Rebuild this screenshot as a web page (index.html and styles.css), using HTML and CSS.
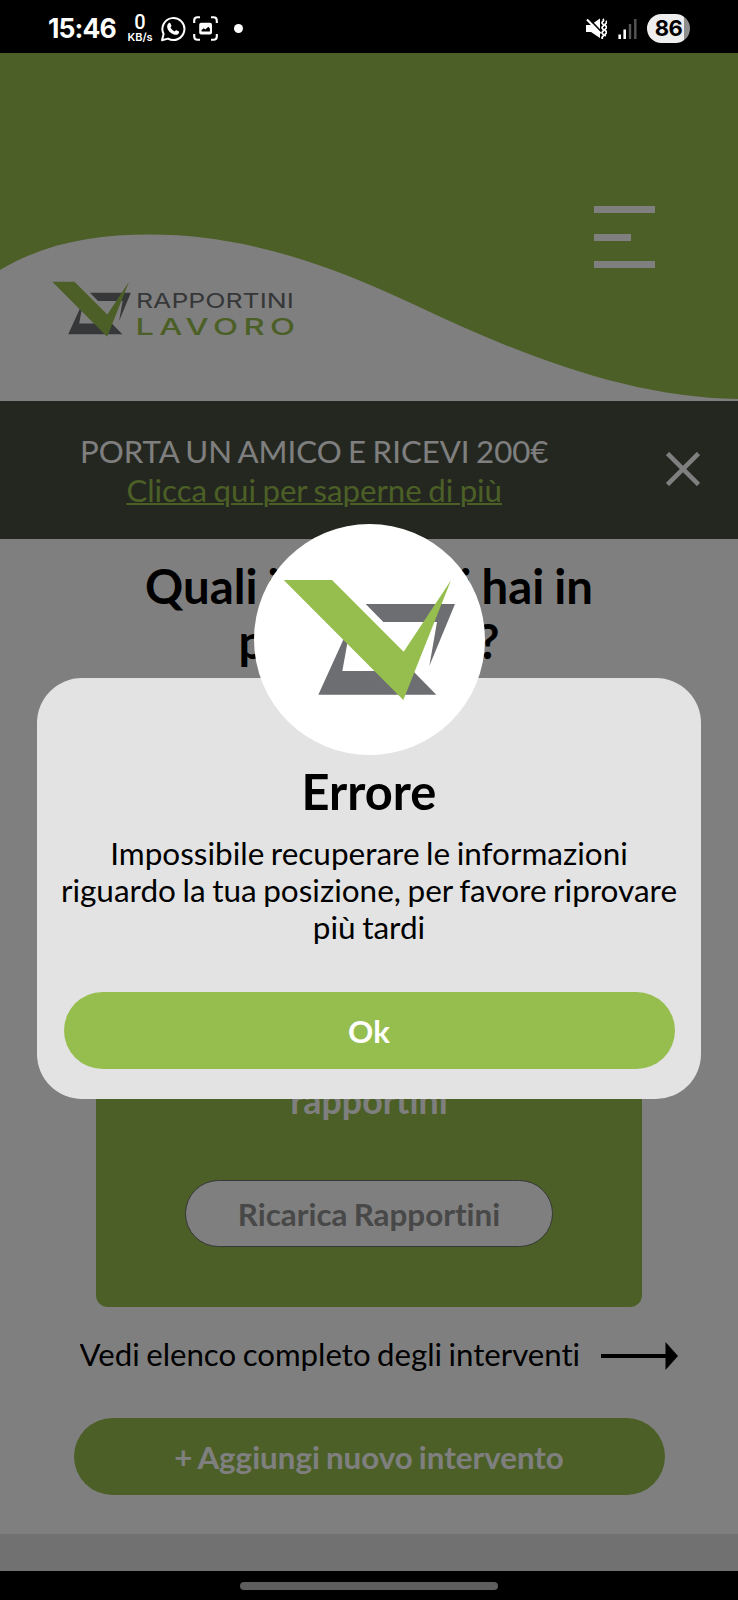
FILE: index.html
```html
<!DOCTYPE html>
<html lang="it">
<head>
<meta charset="utf-8">
<meta name="viewport" content="width=738">
<title>Rapportini Lavoro</title>
<link rel="stylesheet" href="styles.css">
</head>
<body>
<div class="phone">
  <div class="statusbar">
    <span class="clock">15:46</span>
    <span class="netspeed"><b>0</b><small>KB/s</small></span>
    <svg class="ic-whatsapp" viewBox="0 0 26 26"><path d="M2 24.2 3.6 18A11 11 0 1 1 8 22.6Z" fill="none" stroke="#fff" stroke-width="2" stroke-linejoin="round"/><path d="M8.6 7.2c.6-.6 1.500-.5 1.900.3l.9 2c.2.500 0 1-.9 2 1 1.900 2.300 3 4.200 3.900.8-.9 1.200-1.300 1.800-1.100l2.100 1c.6.400.6.900.3 1.600-.9 1.900-2.900 2.300-5.100 1.500-3.500-1.300-6-4-6.600-7-.3-1.700.4-3.300 1.400-4.200Z" fill="#fff"/></svg>
    <svg class="ic-capture" viewBox="0 0 25 25"><path d="M1.200 7V4.500Q1.200 1.200 4.500 1.200H7M18 1.200h2.500q3.300 0 3.300 3.300V7M23.800 18v2.500q0 3.300-3.300 3.300H18M7 23.800H4.500q-3.300 0-3.300-3.300V18" fill="none" stroke="#fff" stroke-width="2.100"/><rect x="6.200" y="6.800" width="12.800" height="11.600" rx="2" fill="#fff"/><path d="M8.500 15.600v-1.600l2.300-1.700 1.500 1.200 3-2.700 1.600 1.600v3.200Z" fill="#000"/></svg>
    <span class="dot"></span>
    <span class="spacer"></span>
    <svg class="ic-mute" viewBox="0 0 21 21"><path d="M0 7h4.500L14 .5v19.500L5 14H0Z" fill="#fff"/><path d="M2.800 .5 15 13.500" stroke="#000" stroke-width="1.800"/><path d="M1 1.500 14.500 15.500" stroke="#fff" stroke-width="2"/><path d="M16.800 1q1.600 1.200 0 2.500t0 2.500 0 2.500 0 2.500 0 2.500 0 2.500 0 2.500 0 2.500M19.800 3q1.600 1.200 0 2.500t0 2.500 0 2.500 0 2.500 0 2.500 0 2.500" fill="none" stroke="#fff" stroke-width="1.700"/></svg>
    <svg class="ic-signal" viewBox="0 0 20 20"><path d="M1.700 15.500V20M6.700 10.500V20" stroke="#fff" stroke-width="2.600"/><path d="M12 5v15M17.300 0v20" stroke="#555" stroke-width="2.400"/></svg>
    <span class="battery">86</span>
  </div>

  <div class="app">
    <header class="header">
      <svg class="wave" viewBox="0 53 738 348" preserveAspectRatio="none"><path d="M0 53H738V399C630 398 520 355 415 305 330 265 245 234.500 150 234.500 95 234.500 45 243 0 270Z" fill="#96be4c"/></svg>
      <svg class="brand" viewBox="52 281 246 57">
        <g transform="translate(32.300 249.600) scale(.1528)">
          <path d="M377 282H645L568 468 591 336H430ZM312 385 235 554H589L522 486 490 483H307L322 400Z" fill="#6d6e71"/>
          <path d="M131 210H276L491 425 633 211 490 570Z" fill="#96be4c"/>
        </g>
        <text class="brand-top" x="136" y="308.300" textLength="158" lengthAdjust="spacingAndGlyphs">RAPPORTINI</text>
        <text class="brand-bottom" transform="translate(135.500 334.800) scale(1.450 1)" x="0" y="0" textLength="110" lengthAdjust="spacing">LAVORO</text>
      </svg>
      <div class="burger"><i></i><i class="short"></i><i></i></div>
    </header>

    <section class="banner">
      <div class="banner-text">
        <p>PORTA UN AMICO E RICEVI 200€</p>
        <a>Clicca qui per saperne di più</a>
      </div>
      <svg class="close" viewBox="0 0 34 34"><path d="M1.500 1.500 32.500 32.500M32.500 1.500 1.500 32.500" stroke="#fff" stroke-width="4.600"/></svg>
    </section>

    <main class="main">
      <h1>Quali interventi hai in<br>programma?</h1>
      <section class="card">
        <p>rapportini</p>
        <div class="reload">Ricarica Rapportini</div>
      </section>
      <div class="list-link">
        <span>Vedi elenco completo degli interventi</span>
        <svg viewBox="0 0 77 28"><path d="M0 14H66" stroke="#000" stroke-width="4"/><path d="M64.500 0 77 14 64.500 28Z"/></svg>
      </div>
      <div class="add"><span>+ Aggiungi nuovo intervento</span></div>
    </main>
    <footer class="footer"></footer>

    <div class="overlay">
      <div class="modal">
        <div class="badge">
          <svg viewBox="0 0 780 780">
            <path d="M377 282H645L568 468 591 336H430ZM312 385 235 554H589L522 486 490 483H307L322 400Z" fill="#6d6e71"/>
            <path d="M131 210H276L491 425 633 211 490 570Z" fill="#96be4f"/>
          </svg>
        </div>
        <h2>Errore</h2>
        <p>Impossibile recuperare le informazioni riguardo la tua posizione, per favore riprovare più tardi</p>
        <div class="ok">Ok</div>
      </div>
    </div>
  </div>

  <div class="navbar"><span></span></div>
</div>
</body>
</html>
```

FILE: styles.css
```css
* { box-sizing: border-box; }
body { margin: 0; background: #000; font-family: Lato, "Liberation Sans", sans-serif; font-variant-ligatures: none; word-spacing: -1.5px; color: #000; }
h1, h2, p { margin: 0; }
svg { display: block; flex: none; }

.phone { width: 738px; height: 1600px; display: flex; flex-direction: column; overflow: hidden; }

/* system status bar */
.statusbar { height: 53px; flex: none; display: flex; align-items: center; padding: 4px 48px 0; background: #000; color: #fff; font-family: Inter, sans-serif; }
.clock { width: 79px; font-size: 26.5px; font-weight: 700; line-height: 30px; padding-bottom: 1px; letter-spacing: -.9px; white-space: nowrap; }
.netspeed { width: 26px; margin-right: 7px; display: flex; flex-direction: column; align-items: center; }
.netspeed b { font-family: Roboto, sans-serif; font-size: 20px; line-height: 17px; font-weight: 500; }
.netspeed small { font-size: 11px; line-height: 12px; font-weight: 600; }
.ic-whatsapp { width: 26px; height: 26px; margin-right: 7px; }
.ic-capture { width: 25px; height: 25px; margin-right: 16px; }
.dot { width: 9px; height: 9px; border-radius: 50%; background: #fff; }
.spacer { flex: 1; }
.ic-mute { width: 21px; height: 21px; margin-right: 11px; }
.ic-signal { width: 20px; height: 20px; margin-right: 9px; }
.battery { width: 43px; height: 29px; border-radius: 15px; background: linear-gradient(90deg, #eee 37px, #8e8e8e 37px); color: #000; font-size: 22px; line-height: 29px; font-weight: 700; letter-spacing: -.5px; text-align: center; }

/* page behind the dialog */
.app { position: relative; flex: 1; display: flex; flex-direction: column; background: #fff; }
.header { position: relative; height: 348px; flex: none; display: flex; justify-content: space-between; align-items: flex-start; padding: 153px 83px 0 52px; }
.wave { position: absolute; inset: 0; width: 738px; height: 348px; }
.brand { position: relative; width: 246px; height: 57px; margin-top: 75px; }
.brand text { font-family: Inter, sans-serif; }
.brand-top { font-size: 20.5px; font-weight: 400; fill: #6d6e71; }
.brand-bottom { font-size: 22.5px; font-weight: 500; fill: #96be4c; }
.burger { position: relative; width: 61px; display: flex; flex-direction: column; gap: 20.500px; }
.burger i { height: 7px; background: #fff; }
.burger .short { width: 37px; }

.banner { height: 138px; flex: none; display: flex; align-items: center; justify-content: space-between; padding: 0 38px 0 80px; background: #484e40; color: #fff; }
.banner-text { padding-bottom: 2px; text-align: center; font-size: 31.2px; line-height: 39px; white-space: nowrap; }
.banner a { display: block; width: max-content; height: 36px; margin: 0 auto; overflow: hidden; color: #96be4c; text-decoration: underline; text-decoration-thickness: 2px; }
.close { width: 34px; height: 34px; margin-bottom: 2px; }

.main { flex: 1; display: flex; flex-direction: column; align-items: center; padding-top: 19px; }
.main h1 { font-size: 47.3px; line-height: 55px; font-weight: 700; text-align: center; }
.card { width: 546px; height: 507px; margin-top: 132px; display: flex; flex-direction: column; align-items: center; justify-content: flex-end; padding-bottom: 60px; border-radius: 12px; background: #96be4c; color: #fff; }
.card p { font-size: 35.8px; line-height: 40px; font-weight: 700; margin-bottom: 59px; }
.reload { width: 368px; height: 67px; border: 1px solid #6d6e71; border-radius: 34px; background: #fff; color: #909090; font-size: 31.4px; line-height: 67px; font-weight: 700; text-align: center; }
.list-link { width: 598px; height: 37px; margin: 28px 0 0 19px; display: flex; align-items: center; justify-content: space-between; }
.list-link span { height: 35px; overflow: hidden; font-size: 31.2px; line-height: 37px; white-space: nowrap; }
.list-link svg { width: 77px; height: 28px; margin-top: 5px; }
.add { width: 591px; height: 77px; margin-top: 46px; display: flex; justify-content: center; align-items: center; border-radius: 39px; background: #96be4c; color: #fff; font-size: 31.3px; line-height: 37px; font-weight: 700; }
.add span { height: 35px; overflow: hidden; }
.footer { height: 37px; flex: none; background: #e2e2e2; }

/* dialog */
.overlay { position: absolute; inset: 0; padding: 625px 37px 0; background: rgba(0, 0, 0, .5); }
.modal { position: relative; height: 421px; padding: 86px 20px 0; border-radius: 45px; background: #e3e3e3; text-align: center; }
.badge { position: absolute; left: 217px; top: -154px; width: 231px; height: 231px; border-radius: 50%; background: #fff; }
.badge svg { width: 260px; height: 260px; margin: -14px 0 0 -14px; }
.modal h2 { font-size: 48.8px; line-height: 55px; font-weight: 700; }
.modal p { margin-top: 16px; font-size: 31.5px; line-height: 37px; }
.ok { width: 611px; height: 77px; margin: 46px auto 0; border-radius: 39px; background: #96be4f; color: #fff; font-size: 31.3px; line-height: 79px; font-weight: 700; }

.navbar { height: 29px; flex: none; display: flex; justify-content: center; align-items: center; background: #000; }
.navbar span { width: 258px; height: 8px; border-radius: 4px; background: #5e5e5e; }
```
